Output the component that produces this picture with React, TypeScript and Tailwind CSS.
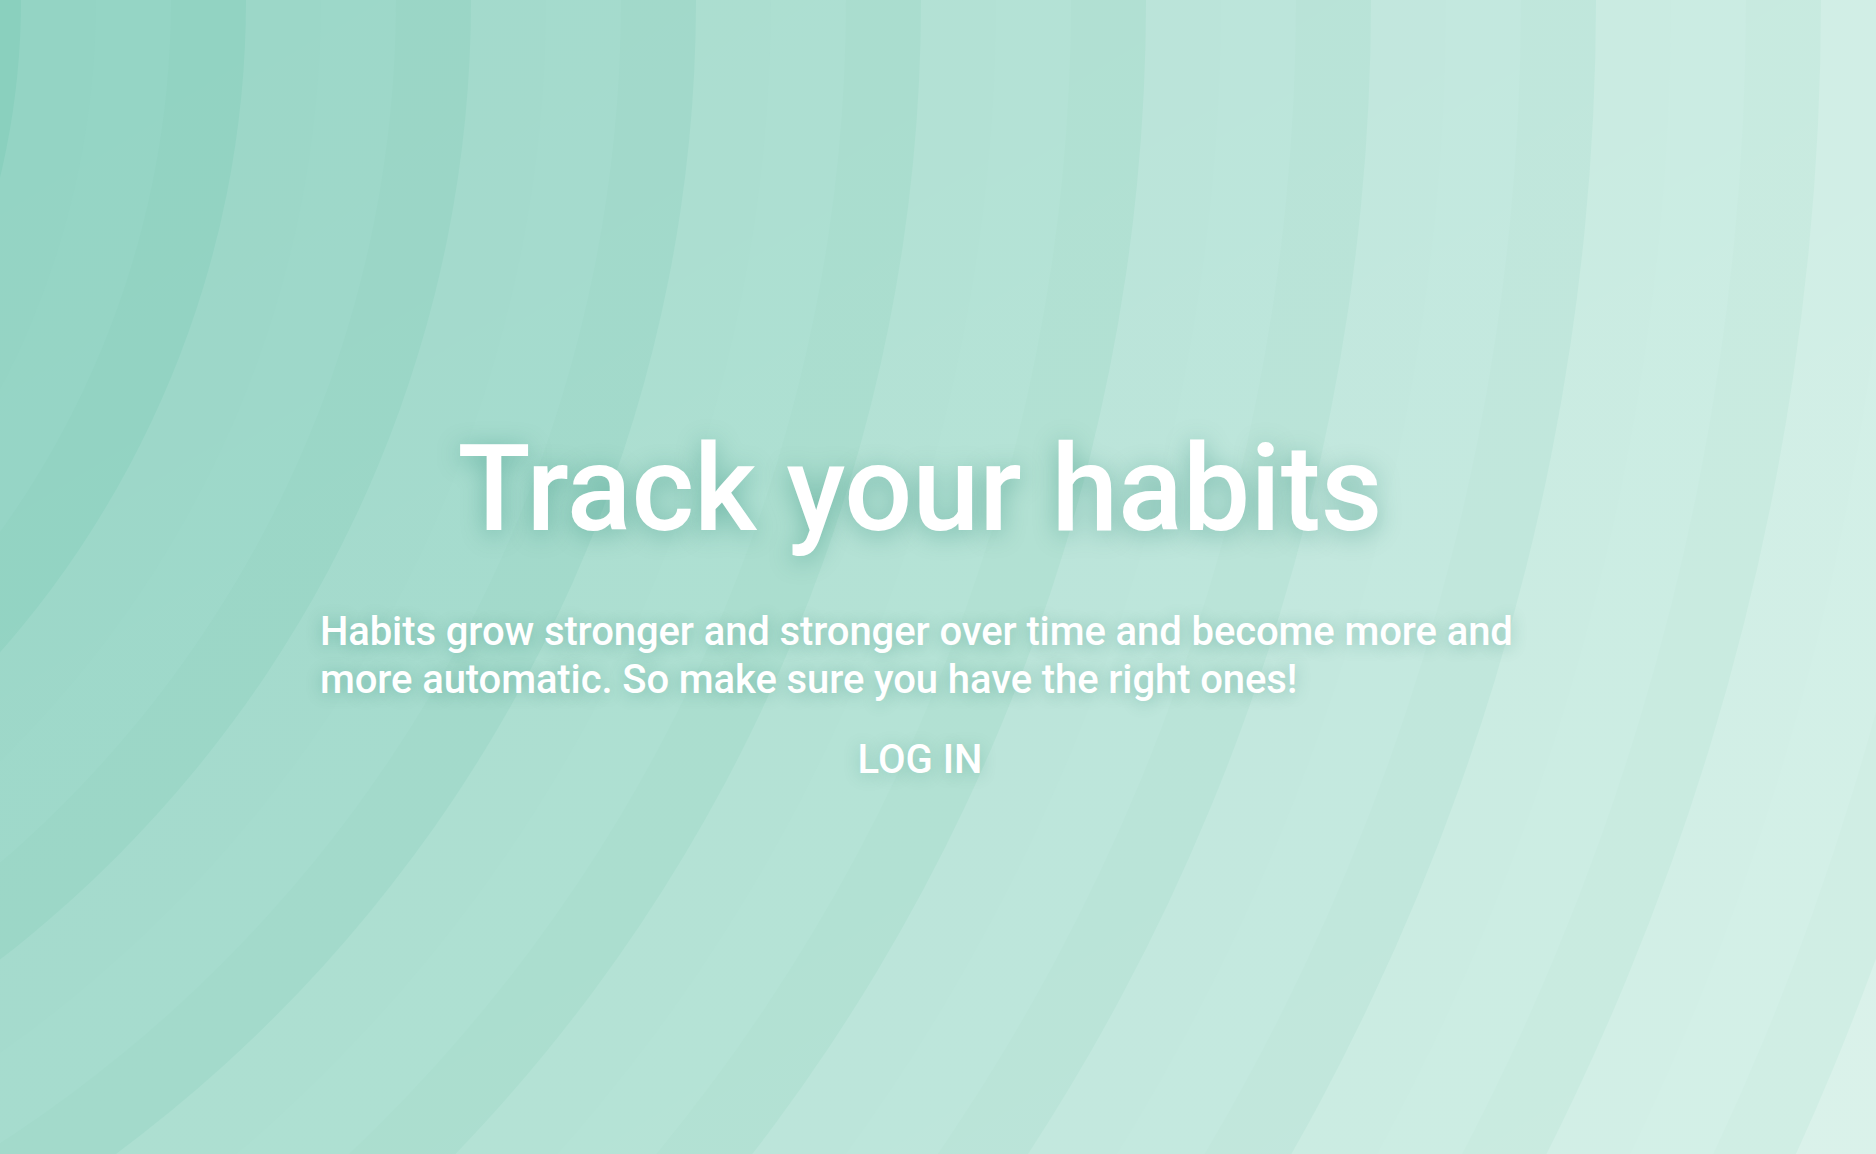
import React from "react";

// concentric bands, centred off-screen to the left
const CX = -742;
const CY = 0;
const R0 = 763;
const STEP = 75;
const BANDS = 30;

const START = [148, 212, 196];
const END = [216, 241, 233];

function bandColor(k: number) {
  const g = Math.floor((k - 1) / 3);
  const p = (((k - 1) % 3) + 3) % 3;
  const t = g / 9;
  const c = START.map((s, i) => s + (END[i] - s) * t);
  const d = p === 1 ? [1, 1, 1] : p === 2 ? [-2, -1, -2] : [0, 0, 0];
  return `rgb(${c.map((v, i) => Math.round(v + d[i])).join(",")})`;
}

function Background() {
  const bands = [];
  for (let k = BANDS; k >= 0; k--) {
    bands.push(
      <circle key={k} cx={CX} cy={CY} r={R0 + STEP * k} fill={bandColor(k)} />
    );
  }
  return (
    <svg
      className="absolute inset-0 h-full w-full"
      viewBox="0 0 1876 1154"
      preserveAspectRatio="xMinYMin slice"
    >
      <defs>
        <linearGradient id="sheen" x1="0" y1="0" x2="1" y2="1">
          <stop offset="0" stopColor="#ffffff" stopOpacity="0" />
          <stop offset="1" stopColor="#ffffff" stopOpacity="0.05" />
        </linearGradient>
      </defs>
      <rect width="1876" height="1154" fill={bandColor(BANDS + 1)} />
      {bands}
      <rect width="1876" height="1154" fill="url(#sheen)" />
    </svg>
  );
}

export default function App() {
  return (
    <div className="relative min-h-screen w-full overflow-hidden font-['Roboto',sans-serif]">
      <Background />
      <div className="relative flex min-h-screen flex-col items-center justify-center pt-[59px] pr-[36px] text-white">
        <h1 className="text-[120px] leading-none font-medium [text-shadow:0_4px_24px_rgba(0,110,90,0.35)]">
          Track your habits
        </h1>
        <p className="mt-[59px] w-[1200px] text-left text-[40px] leading-[48px] font-medium tracking-[-0.1px] [text-shadow:0_2px_16px_rgba(0,110,90,0.3)]">
          Habits grow stronger and stronger over time and become more and more
          automatic. So make sure you have the right ones!
        </p>
        <button className="mt-[32px] text-[40px] leading-[48px] font-medium uppercase [text-shadow:0_2px_16px_rgba(0,110,90,0.25)]">
          Log in
        </button>
      </div>
    </div>
  );
}
